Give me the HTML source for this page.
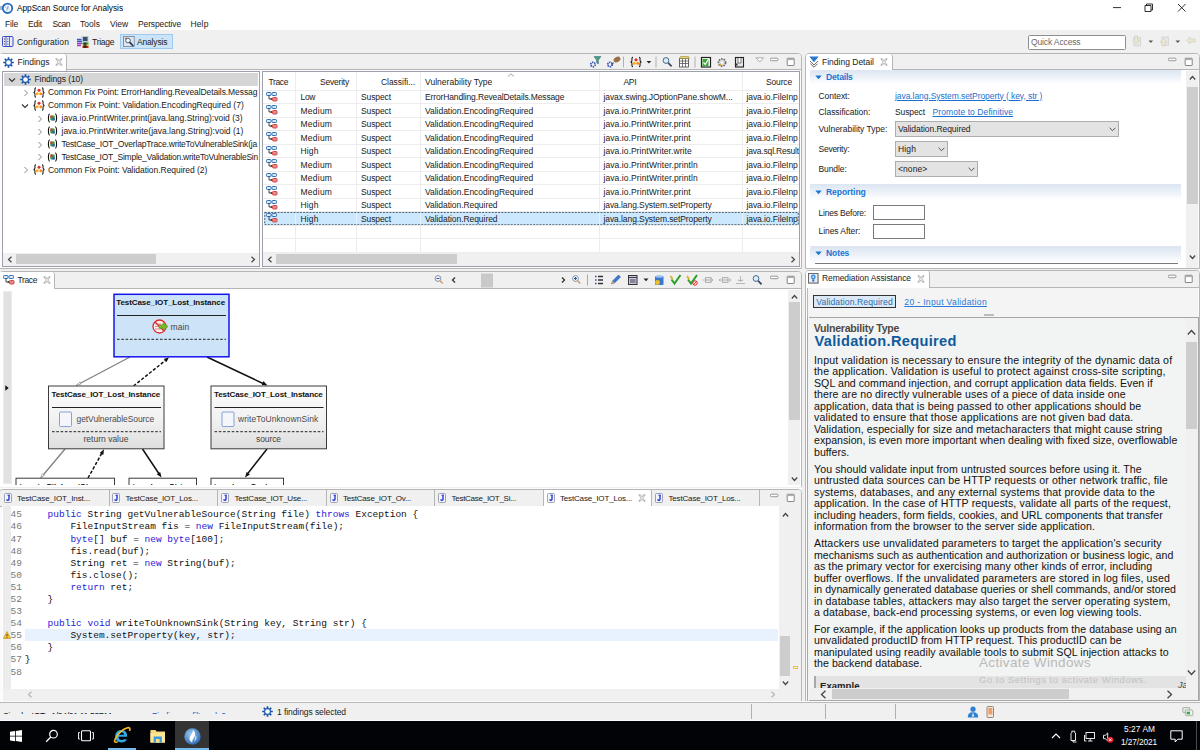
<!DOCTYPE html>
<html><head><meta charset="utf-8"><title>AppScan Source for Analysis</title>
<style>
*{box-sizing:border-box;margin:0;padding:0}
html,body{width:1200px;height:750px;overflow:hidden;background:#f0f0f0;font-family:"Liberation Sans",sans-serif;font-size:8.5px;color:#1a1a1a}
.abs,.abs *{position:absolute}
.t{white-space:pre;line-height:12px;height:12px}
#title{left:0;top:0;width:1200px;height:16px;background:#fff}
#menu{left:0;top:16px;width:1200px;height:14px;background:#fff}
#tool{left:0;top:30px;width:1200px;height:23px;background:#f0f0f0}
.panel{background:#f0f0f0;border:1px solid #a9a9a9}
.tabbar{left:0;top:0;height:16px;right:0;border-bottom:1px solid #a9a9a9;background:#f0f0f0}
.tab{top:0;height:16px;background:#fff;border-right:1px solid #a9a9a9}
.white{background:#fff}
#taskbar{left:0;top:720px;width:1200px;height:30px;background:#020307}
#status{left:0;top:701px;width:1200px;height:19px;background:#f0f0f0}

.pan{background:#fbfbfb}
.hl{height:1px;background:#ababab}
.vl{width:1px;background:#b6b6b6}
.box{background:#fff;border:1px solid #9da1ab}
.sb{background:#f0f0f0}
.th{background:#cdcdcd}
.chev{stroke:#444;stroke-width:1.1;fill:none}
.gl{background:#ededed}

.lnk{color:#1a6fd0;text-decoration:underline}
.sec{font-weight:bold;color:#1a76d2;font-size:8.6px}
.combo{background:#e3e3e3;border:1px solid #adadad}
.inp{background:#fff;border:1px solid #7a7a7a}

.rb{font-size:10.600px;line-height:11.46px;height:11.46px;color:#111;white-space:pre}

.code{font-family:"Liberation Mono",monospace;font-size:9.510px;line-height:12.130px;height:12.130px;white-space:pre;color:#111}
.kw{color:#2a1ad8;position:static}
.ln{font-family:"Liberation Mono",monospace;font-size:9.510px;line-height:12.130px;height:12.130px;color:#787878;width:20px;text-align:right}
</style></head><body>
<div class="abs" id="root" style="left:0;top:0;width:1200px;height:750px">

<!-- TITLE -->
<div id="title">
<svg style="left:0;top:1.500px" width="15" height="13" viewBox="0 0 15 13"><rect x="0" y="4" width="2.500" height="4" fill="#a9b9d3"/><circle cx="7.500" cy="6.300" r="4.700" fill="#fbfdff" stroke="#2b6fbc" stroke-width="1.900"/><path d="M7.800 3c1.100 1 1.200 2.400.5 3.500-.5.800-1.100 1.300-.9 2.400-1.200-.7-1.500-2-.8-3 .4-.7 1.300-1.400 1.200-2.900z" fill="#8ab4e0"/><circle cx="5.800" cy="5" r=".6" fill="#6aa0d8"/><circle cx="9.300" cy="7" r=".5" fill="#6aa0d8"/></svg>
<div class="t" style="letter-spacing:-0.015px;left:17px;top:2.5px;font-size:8.25px;color:#000">AppScan Source for Analysis</div>
<svg style="left:1108px;top:0" width="90" height="16" viewBox="0 0 90 16"><g stroke="#1a1a1a" stroke-width="0.9" fill="none"><path d="M5 7.6h8"/><path d="M37 5.500h6v6h-6z"/><path d="M38.500 5.500v-1.500h6v6h-1.500"/><path d="M70 4l7.500 7.500M77.500 4l-7.500 7.500"/></g></svg>
</div>
<!-- MENU -->
<div id="menu">
<div class="t" style="letter-spacing:-0.176px;left:5px;top:1.5px">File</div>
<div class="t" style="letter-spacing:-0.164px;left:28px;top:1.5px">Edit</div>
<div class="t" style="letter-spacing:-0.469px;left:52.500px;top:1.5px">Scan</div>
<div class="t" style="letter-spacing:0.031px;left:80px;top:1.5px">Tools</div>
<div class="t" style="letter-spacing:-0.070px;left:110px;top:1.5px">View</div>
<div class="t" style="letter-spacing:-0.129px;left:138px;top:1.5px">Perspective</div>
<div class="t" style="letter-spacing:0.129px;left:190.500px;top:1.5px">Help</div>
</div>
<!-- TOOLBAR -->
<div id="tool">
<svg style="left:2px;top:6px" width="12" height="11" viewBox="0 0 12 11"><rect x=".5" y=".5" width="10.500" height="10" rx="1" fill="#e8ecfa" stroke="#3b48c8"/><path d="M4 1v9M7.500 1v9" stroke="#3b48c8" stroke-width=".8"/><path d="M2 3h1M2 5.500h1M2 8h1M5.300 3h1M5.300 5.500h1M5.300 8h1" stroke="#333" stroke-width=".9"/></svg>
<div class="t" style="letter-spacing:0.111px;left:17px;top:5.5px">Configuration</div>
<svg style="left:77px;top:6px" width="12" height="12" viewBox="0 0 12 12"><rect x="4.500" y="0" width="7" height="6" fill="#bcc8d8"/><rect x="6" y="1" width="4.500" height="4" fill="#39506e"/><path d="M0 3.500h4.500M0 5.500h5" stroke="#3a56c8" stroke-width="1.300"/><path d="M0 7.500h5M0 9.500h4" stroke="#9a3fc0" stroke-width="1.300"/><rect x="5.500" y="6.500" width="6" height="2" fill="#20a030"/><rect x="5.500" y="8.500" width="6" height="1.500" fill="#e0c020"/><rect x="5.500" y="10" width="6" height="2" fill="#d02818"/><rect x="6.500" y="6.500" width="3" height="5.500" fill="#222" opacity=".75"/></svg>
<div class="t" style="letter-spacing:-0.247px;left:92px;top:5.5px">Triage</div>
<div style="left:120px;top:4px;width:53px;height:15px;background:#cce4f7;border:1px solid #9ccaf0"></div>
<svg style="left:123px;top:6px" width="12" height="11" viewBox="0 0 12 11"><rect x=".4" y=".4" width="10.800" height="10" fill="#dfe6ee" stroke="#6d7f96" stroke-width=".8"/><path d="M2 2l1 1.500M3.500 1.500l.5 1.500" stroke="#c03030" stroke-width=".8"/><circle cx="5" cy="4.500" r="2.300" fill="#f4f8ff" stroke="#44556a" stroke-width=".9"/><path d="M6.600 6.200l3.600 3.800" stroke="#2a3a50" stroke-width="1.800"/></svg>
<div class="t" style="letter-spacing:-0.170px;left:137px;top:5.5px">Analysis</div>
<div style="left:1028px;top:4.500px;width:98px;height:15px;background:#fff;border:1px solid #8e8e8e;border-radius:1.500px"></div>
<div class="t" style="letter-spacing:-0.128px;left:1031px;top:6px;color:#6a6a6a">Quick Access</div>
<svg style="left:1130px;top:5px" width="70" height="14" viewBox="0 0 70 14"><g fill="#e6e6e2" stroke="#cacaca" stroke-width=".6"><rect x="4" y="2.500" width="6.500" height="8.500"/><path d="M4.500 1v4h-2l3.500 3.500 3.500-3.500h-2v-4z" fill="#ece8c8"/><rect x="32" y="2" width="6.500" height="8.500"/><path d="M32 11v-4h-2l3.500-3.500 3.500 3.500h-2v4z" fill="#ece8c8"/><path d="M65 4h-5v-2l-3.500 3.500 3.500 3.500v-2h5z" fill="#ece8c8"/></g><path d="M18.500 5.500h4.600l-2.300 2.500zM45.500 5.500h4.600l-2.300 2.500z" fill="#555"/></svg>
</div>

<!-- FINDINGS PANEL -->
<div class="pan" id="pFind" style="left:0;top:53px;width:802px;height:216px">
<div style="left:-1px;top:0;width:803px;height:216px;border:1px solid #b6b6b6;border-radius:3.500px 3.500px 0 0;background:#fbfbfb"></div><div style="left:0px;top:1px;width:801px;height:15.500px;background:#f0f0f0;border-radius:3px 3px 0 0"></div><div class="hl" style="left:67px;top:16.200px;width:734px;background:#b6b6b6"></div>
<div style="left:0;top:1px;width:67px;height:16.500px;background:#fff;border-right:1px solid #b6b6b6;border-radius:0 3px 0 0"></div>
<svg style="left:3px;top:3.5px" width="11" height="11" viewBox="0 0 11 11"><g stroke="#1a4fa8" stroke-width="1.700"><path d="M5.500 .2v10.600M.2 5.500h10.600M1.750 1.750l7.500 7.500M9.250 1.750l-7.500 7.500"/></g><circle cx="5.500" cy="5.500" r="3.500" fill="#1f5fb8"/><circle cx="5.500" cy="5.500" r="2.300" fill="#fff"/></svg>
<div class="t" style="letter-spacing:-0.018px;left:17.500px;top:2.500px">Findings</div>
<svg style="left:54.5px;top:4.5px" width="8" height="8" viewBox="0 0 8 8"><path d="M.8 .8h1.600l1.600 2 1.600-2h1.600l-2.400 3.200 2.400 3.200h-1.600l-1.600-2-1.600 2h-1.600l2.400-3.200z" fill="#fff" stroke="#808080" stroke-width=".6"/></svg>
<svg style="left:588px;top:2px" width="162" height="14" viewBox="0 0 162 14">
<path d="M6 1.500h7l-2.600 3.500v4l-1.800-1.300v-2.700z" fill="#4a9a8a" stroke="#2a6a6a" stroke-width=".5"/><circle cx="5" cy="9.500" r="2.200" fill="none" stroke="#2040c0" stroke-width="1.600" stroke-dasharray="1.300 .8"/>
<ellipse cx="29" cy="4.500" rx="3.600" ry="2.600" fill="#9a7048" transform="rotate(-30 29 4.500)"/><path d="M25.500 7.500l-2 3" stroke="#6a4a2a" stroke-width="1.200"/><circle cx="22" cy="9.500" r="2.200" fill="none" stroke="#2040c0" stroke-width="1.600" stroke-dasharray="1.300 .8"/>
<path d="M35.500 1.500v11" stroke="#b0b0b0" stroke-width="1"/>
<g transform="translate(42,1.500)"><path d="M3 .8c-1.500 0-1 2-1 3s-.6 1.500-1.400 1.700c.8.200 1.400.700 1.400 1.700s-.5 3 1 3M9 .8c1.500 0 1 2 1 3s.6 1.500 1.400 1.700c-.8.200-1.400.700-1.400 1.700s.5 3-1 3" stroke="#1a1a1a" stroke-width="1.050" fill="none"/><circle cx="6" cy="3.200" r="1.500" fill="#e82820"/><circle cx="4.200" cy="6.800" r="1.500" fill="#f8b018"/><circle cx="7.800" cy="6.800" r="1.500" fill="#f89018"/></g>
<path d="M58.500 6h4.800l-2.400 2.600z" fill="#222"/>
<path d="M68 1.500v11" stroke="#b0b0b0" stroke-width="1"/>
<circle cx="78" cy="5.500" r="2.900" fill="#d8ecfa" stroke="#4a6a8a" stroke-width="1"/><path d="M80.200 7.800l3.400 3.600" stroke="#3a4a5a" stroke-width="1.700"/>
<rect x="91.500" y="3.500" width="9" height="8.500" fill="#fff" stroke="#444" stroke-width=".8"/><path d="M91.500 6h9M91.500 8.500h9M94.500 3.500v8.500M97.500 3.500v8.500" stroke="#444" stroke-width=".7"/><path d="M92.500 1.500h8l1 2h-10z" fill="#e8d878" stroke="#8a7a30" stroke-width=".5"/>
<path d="M107 1.500v11" stroke="#b0b0b0" stroke-width="1"/>
<rect x="113.500" y="2.500" width="9" height="9.500" fill="#fff" stroke="#222" stroke-width="1.200"/><rect x="114.500" y="4" width="6" height="7" fill="#38a838"/><path d="M115.500 7.500l1.800 2 3.200-5.500" stroke="#fff" stroke-width="1.200" fill="none"/>
<circle cx="134" cy="7.500" r="3.600" fill="#d8d8d8" stroke="#6a6a6a" stroke-width="1.600" stroke-dasharray="1.600 1"/><circle cx="134" cy="7.500" r="1.300" fill="#fff"/><path d="M130 10l2.500-1.500 1 2.500z" fill="#e0a020"/>
<rect x="147.500" y="2.500" width="8" height="9.500" fill="#e8e8e8" stroke="#222" stroke-width="1.100"/><path d="M150 3v5h3v-5" stroke="#555" stroke-width=".8" fill="#fff"/><path d="M146.500 9.500l3-1.500v3z" fill="#333"/>
</svg>
<svg style="left:755px;top:4px" width="10" height="6" viewBox="0 0 10 6"><path d="M1 .8h7.500l-3.750 4.200z" fill="#fff" stroke="#8a8a8a" stroke-width=".7"/></svg>
<svg style="left:770px;top:4px" width="26" height="10" viewBox="0 0 26 10"><rect x=".4" y="1.200" width="7.600" height="2.500" rx=".9" fill="#fff" stroke="#808080" stroke-width=".8"/><rect x="17.200" y="1.300" width="7" height="7.200" rx=".5" fill="#fff" stroke="#707070" stroke-width=".85"/><path d="M17.500 2.500h6.400" stroke="#b0b0b0" stroke-width="1.200"/></svg>
<div class="box" style="left:2px;top:18px;width:258px;height:196px;overflow:hidden">
<div style="left:1px;top:0.500px;width:254px;height:13.500px;background:#d6d6d6"></div>
<svg style="left:5px;top:4.5px" width="8" height="6" viewBox="0 0 8 6"><path d="M1 1.500l3 3 3-3" stroke="#333" stroke-width="1.100" fill="none"/></svg>
<svg style="left:17px;top:1.5px" width="11" height="11" viewBox="0 0 11 11"><g stroke="#1a4fa8" stroke-width="1.700"><path d="M5.500 .2v10.600M.2 5.500h10.600M1.750 1.750l7.500 7.500M9.250 1.750l-7.500 7.500"/></g><circle cx="5.500" cy="5.500" r="3.500" fill="#1f5fb8"/><circle cx="5.500" cy="5.500" r="2.300" fill="#fff"/></svg>
<div class="t" style="letter-spacing:-0.093px;left:31.500px;top:1px">Findings (10)</div>
<svg style="left:20px;top:16.5px" width="6" height="8" viewBox="0 0 6 8"><path d="M1.500 1l3 3-3 3" stroke="#8a8a8a" stroke-width="1" fill="none"/></svg>
<svg style="left:30px;top:14.5px" width="12" height="11" viewBox="0 0 12 11"><path d="M3 .8c-1.500 0-1 2-1 3s-.6 1.500-1.400 1.700c.8.200 1.400.700 1.400 1.700s-.5 3 1 3M9 .8c1.500 0 1 2 1 3s.6 1.500 1.400 1.700c-.8.200-1.400.700-1.400 1.700s.5 3-1 3" stroke="#1a1a1a" stroke-width="1.050" fill="none"/><circle cx="6" cy="3.200" r="1.500" fill="#e82820"/><circle cx="4.200" cy="6.800" r="1.500" fill="#f8b018"/><circle cx="7.800" cy="6.800" r="1.500" fill="#f89018"/></svg>
<div class="t" style="letter-spacing:-0.090px;left:45px;top:14px">Common Fix Point: ErrorHandling.RevealDetails.Messag</div>
<svg style="left:18px;top:30.5px" width="8" height="6" viewBox="0 0 8 6"><path d="M1 1.500l3 3 3-3" stroke="#333" stroke-width="1.100" fill="none"/></svg>
<svg style="left:30px;top:27.5px" width="12" height="11" viewBox="0 0 12 11"><path d="M3 .8c-1.500 0-1 2-1 3s-.6 1.500-1.400 1.700c.8.200 1.400.700 1.400 1.700s-.5 3 1 3M9 .8c1.500 0 1 2 1 3s.6 1.500 1.400 1.700c-.8.200-1.400.700-1.400 1.700s.5 3-1 3" stroke="#1a1a1a" stroke-width="1.050" fill="none"/><circle cx="6" cy="3.200" r="1.500" fill="#e82820"/><circle cx="4.200" cy="6.800" r="1.500" fill="#f8b018"/><circle cx="7.800" cy="6.800" r="1.500" fill="#f89018"/></svg>
<div class="t" style="letter-spacing:-0.014px;left:45px;top:27px">Common Fix Point: Validation.EncodingRequired (7)</div>
<svg style="left:34px;top:42.5px" width="6" height="8" viewBox="0 0 6 8"><path d="M1.500 1l3 3-3 3" stroke="#8a8a8a" stroke-width="1" fill="none"/></svg>
<svg style="left:44px;top:41px" width="11" height="10" viewBox="0 0 11 10"><path d="M2.600 .6c-1.600 1.200-1.600 7.600 0 8.800M8.400 .6c1.600 1.200 1.600 7.600 0 8.800" stroke="#111" stroke-width="1.100" fill="none"/><rect x="3.300" y="2.500" width="4.400" height="5" rx="1" fill="#3a9a4a"/><rect x="3.300" y="2.500" width="2.200" height="2.500" fill="#d04030"/><rect x="5.500" y="5" width="2.200" height="2.500" fill="#3060c0"/></svg>
<div class="t" style="letter-spacing:0.017px;left:58.5px;top:40px">java.io.PrintWriter.print(java.lang.String):void (3)</div>
<svg style="left:34px;top:55.5px" width="6" height="8" viewBox="0 0 6 8"><path d="M1.500 1l3 3-3 3" stroke="#8a8a8a" stroke-width="1" fill="none"/></svg>
<svg style="left:44px;top:54px" width="11" height="10" viewBox="0 0 11 10"><path d="M2.600 .6c-1.600 1.200-1.600 7.600 0 8.800M8.400 .6c1.600 1.200 1.600 7.600 0 8.800" stroke="#111" stroke-width="1.100" fill="none"/><rect x="3.300" y="2.500" width="4.400" height="5" rx="1" fill="#3a9a4a"/><rect x="3.300" y="2.500" width="2.200" height="2.500" fill="#d04030"/><rect x="5.500" y="5" width="2.200" height="2.500" fill="#3060c0"/></svg>
<div class="t" style="letter-spacing:0.002px;left:58.5px;top:53px">java.io.PrintWriter.write(java.lang.String):void (1)</div>
<svg style="left:34px;top:68.5px" width="6" height="8" viewBox="0 0 6 8"><path d="M1.500 1l3 3-3 3" stroke="#8a8a8a" stroke-width="1" fill="none"/></svg>
<svg style="left:44px;top:67px" width="11" height="10" viewBox="0 0 11 10"><path d="M2.600 .6c-1.600 1.200-1.600 7.600 0 8.800M8.400 .6c1.600 1.200 1.600 7.600 0 8.800" stroke="#111" stroke-width="1.100" fill="none"/><rect x="3.300" y="2.500" width="4.400" height="5" rx="1" fill="#3a9a4a"/><rect x="3.300" y="2.500" width="2.200" height="2.500" fill="#d04030"/><rect x="5.500" y="5" width="2.200" height="2.500" fill="#3060c0"/></svg>
<div class="t" style="letter-spacing:-0.207px;left:58.5px;top:66px">TestCase_IOT_OverlapTrace.writeToVulnerableSink(ja</div>
<svg style="left:34px;top:81.0px" width="6" height="8" viewBox="0 0 6 8"><path d="M1.500 1l3 3-3 3" stroke="#8a8a8a" stroke-width="1" fill="none"/></svg>
<svg style="left:44px;top:79.5px" width="11" height="10" viewBox="0 0 11 10"><path d="M2.600 .6c-1.600 1.200-1.600 7.600 0 8.800M8.400 .6c1.600 1.200 1.600 7.600 0 8.800" stroke="#111" stroke-width="1.100" fill="none"/><rect x="3.300" y="2.500" width="4.400" height="5" rx="1" fill="#3a9a4a"/><rect x="3.300" y="2.500" width="2.200" height="2.500" fill="#d04030"/><rect x="5.500" y="5" width="2.200" height="2.500" fill="#3060c0"/></svg>
<div class="t" style="letter-spacing:-0.233px;left:58.5px;top:78.5px">TestCase_IOT_Simple_Validation.writeToVulnerableSin</div>
<svg style="left:20px;top:94.0px" width="6" height="8" viewBox="0 0 6 8"><path d="M1.500 1l3 3-3 3" stroke="#8a8a8a" stroke-width="1" fill="none"/></svg>
<svg style="left:30px;top:92.0px" width="12" height="11" viewBox="0 0 12 11"><path d="M3 .8c-1.500 0-1 2-1 3s-.6 1.500-1.400 1.700c.8.200 1.400.700 1.400 1.700s-.5 3 1 3M9 .8c1.500 0 1 2 1 3s.6 1.500 1.400 1.700c-.8.200-1.400.700-1.400 1.700s.5 3-1 3" stroke="#1a1a1a" stroke-width="1.050" fill="none"/><circle cx="6" cy="3.200" r="1.500" fill="#e82820"/><circle cx="4.200" cy="6.800" r="1.500" fill="#f8b018"/><circle cx="7.800" cy="6.800" r="1.500" fill="#f89018"/></svg>
<div class="t" style="letter-spacing:-0.040px;left:45px;top:91.5px">Common Fix Point: Validation.Required (2)</div>
<div class="sb" style="left:0;top:180.500px;width:256px;height:13.500px"></div>
<div class="th" style="left:13px;top:182px;width:140px;height:10.300px"></div>
<svg style="left:4px;top:183.600px" width="6" height="7" viewBox="0 0 6 7"><path d="M4.500 .8l-3 2.700 3 2.700" stroke="#444" stroke-width="1.200" fill="none"/></svg>
<svg style="left:247px;top:183.600px" width="6" height="7" viewBox="0 0 6 7"><path d="M1.500 .8l3 2.700-3 2.700" stroke="#444" stroke-width="1.200" fill="none"/></svg>
</div>
<div class="box" style="left:262px;top:18px;width:538px;height:196px;overflow:hidden">
<div class="gl" style="left:32.0px;top:0;width:1px;height:180.500px"></div>
<div class="gl" style="left:92.5px;top:0;width:1px;height:180.500px"></div>
<div class="gl" style="left:157.0px;top:0;width:1px;height:180.500px"></div>
<div class="gl" style="left:335.5px;top:0;width:1px;height:180.500px"></div>
<div class="gl" style="left:478.5px;top:0;width:1px;height:180.500px"></div>
<div class="gl" style="left:0;top:17.5px;width:536px;height:1px"></div>
<div class="gl" style="left:0;top:31.0px;width:536px;height:1px"></div>
<div class="gl" style="left:0;top:44.5px;width:536px;height:1px"></div>
<div class="gl" style="left:0;top:58.0px;width:536px;height:1px"></div>
<div class="gl" style="left:0;top:71.5px;width:536px;height:1px"></div>
<div class="gl" style="left:0;top:85.0px;width:536px;height:1px"></div>
<div class="gl" style="left:0;top:98.5px;width:536px;height:1px"></div>
<div class="gl" style="left:0;top:112.0px;width:536px;height:1px"></div>
<div class="gl" style="left:0;top:125.5px;width:536px;height:1px"></div>
<div class="gl" style="left:0;top:139.0px;width:536px;height:1px"></div>
<div class="gl" style="left:0;top:152.5px;width:536px;height:1px"></div>
<div class="gl" style="left:0;top:166.0px;width:536px;height:1px"></div>
<div class="gl" style="left:0;top:179.5px;width:536px;height:1px"></div>
<div style="left:1px;top:140px;width:535px;height:13.200px;background:#cce8ff"></div><svg style="left:1px;top:140px" width="535" height="13.200" viewBox="0 0 535 13.200"><rect x=".5" y=".5" width="534" height="12.200" fill="none" stroke="#4a5560" stroke-width=".9" stroke-dasharray="2 1.200"/></svg>
<div style="left:32.0px;top:140.500px;width:1px;height:11.500px;background:#e4f2fd"></div>
<div style="left:92.5px;top:140.500px;width:1px;height:11.500px;background:#e4f2fd"></div>
<div style="left:157.0px;top:140.500px;width:1px;height:11.500px;background:#e4f2fd"></div>
<div style="left:335.5px;top:140.500px;width:1px;height:11.500px;background:#e4f2fd"></div>
<div style="left:478.5px;top:140.500px;width:1px;height:11.500px;background:#e4f2fd"></div>
<div class="t" style="letter-spacing:-0.384px;left:5.5px;top:3.5px">Trace</div>
<div class="t" style="letter-spacing:-0.215px;left:57px;top:3.5px">Severity</div>
<div class="t" style="letter-spacing:-0.044px;left:118px;top:3.5px">Classifi...</div>
<div class="t" style="letter-spacing:0.037px;left:162px;top:3.5px">Vulnerability Type</div>
<div class="t" style="letter-spacing:-0.334px;left:360.5px;top:3.5px">API</div>
<div class="t" style="letter-spacing:-0.156px;left:503px;top:3.5px">Source</div>
<svg style="left:244px;top:0.500px" width="8" height="4" viewBox="0 0 8 4"><path d="M1 3.500l3-2.700 3 2.700" stroke="#8a8a8a" stroke-width=".8" fill="none"/></svg>
<svg style="left:3px;top:19.5px" width="12" height="10" viewBox="0 0 12 10"><rect x=".5" y=".5" width="4.500" height="3" rx=".8" fill="#dce9f7" stroke="#2f6fb5"/><rect x="6" y=".5" width="4.500" height="3" rx=".8" fill="#dce9f7" stroke="#2f6fb5"/><path d="M3 3.500v3.500h3" stroke="#333" stroke-width=".9" fill="none"/><path d="M4.800 5.800l1.700 1.200-1.700 1.200z" fill="#222"/><rect x="6.500" y="5.500" width="4.500" height="3.500" rx=".8" fill="#e58a8a" stroke="#d04848"/></svg>
<div class="t" style="letter-spacing:-0.298px;left:37.5px;top:19.0px">Low</div>
<div class="t" style="letter-spacing:-0.103px;left:98px;top:19.0px">Suspect</div>
<div class="t" style="letter-spacing:-0.137px;left:162px;top:19.0px">ErrorHandling.RevealDetails.Message</div>
<div class="t" style="letter-spacing:-0.082px;left:340.5px;top:19.0px">javax.swing.JOptionPane.showM...</div>
<div class="t" style="letter-spacing:-0.084px;left:483.5px;top:19.0px">java.io.FileInp</div>
<svg style="left:3px;top:33.0px" width="12" height="10" viewBox="0 0 12 10"><rect x=".5" y=".5" width="4.500" height="3" rx=".8" fill="#dce9f7" stroke="#2f6fb5"/><rect x="6" y=".5" width="4.500" height="3" rx=".8" fill="#dce9f7" stroke="#2f6fb5"/><path d="M3 3.500v3.500h3" stroke="#333" stroke-width=".9" fill="none"/><path d="M4.800 5.800l1.700 1.200-1.700 1.200z" fill="#222"/><rect x="6.500" y="5.500" width="4.500" height="3.500" rx=".8" fill="#e58a8a" stroke="#d04848"/></svg>
<div class="t" style="letter-spacing:0.244px;left:37.5px;top:32.5px">Medium</div>
<div class="t" style="letter-spacing:-0.103px;left:98px;top:32.5px">Suspect</div>
<div class="t" style="letter-spacing:-0.027px;left:162px;top:32.5px">Validation.EncodingRequired</div>
<div class="t" style="letter-spacing:0.074px;left:340.5px;top:32.5px">java.io.PrintWriter.print</div>
<div class="t" style="letter-spacing:-0.084px;left:483.5px;top:32.5px">java.io.FileInp</div>
<svg style="left:3px;top:46.5px" width="12" height="10" viewBox="0 0 12 10"><rect x=".5" y=".5" width="4.500" height="3" rx=".8" fill="#dce9f7" stroke="#2f6fb5"/><rect x="6" y=".5" width="4.500" height="3" rx=".8" fill="#dce9f7" stroke="#2f6fb5"/><path d="M3 3.500v3.500h3" stroke="#333" stroke-width=".9" fill="none"/><path d="M4.800 5.800l1.700 1.200-1.700 1.200z" fill="#222"/><rect x="6.500" y="5.500" width="4.500" height="3.500" rx=".8" fill="#e58a8a" stroke="#d04848"/></svg>
<div class="t" style="letter-spacing:0.244px;left:37.5px;top:46.0px">Medium</div>
<div class="t" style="letter-spacing:-0.103px;left:98px;top:46.0px">Suspect</div>
<div class="t" style="letter-spacing:-0.027px;left:162px;top:46.0px">Validation.EncodingRequired</div>
<div class="t" style="letter-spacing:0.074px;left:340.5px;top:46.0px">java.io.PrintWriter.print</div>
<div class="t" style="letter-spacing:-0.084px;left:483.5px;top:46.0px">java.io.FileInp</div>
<svg style="left:3px;top:60.0px" width="12" height="10" viewBox="0 0 12 10"><rect x=".5" y=".5" width="4.500" height="3" rx=".8" fill="#dce9f7" stroke="#2f6fb5"/><rect x="6" y=".5" width="4.500" height="3" rx=".8" fill="#dce9f7" stroke="#2f6fb5"/><path d="M3 3.500v3.500h3" stroke="#333" stroke-width=".9" fill="none"/><path d="M4.800 5.800l1.700 1.200-1.700 1.200z" fill="#222"/><rect x="6.500" y="5.500" width="4.500" height="3.500" rx=".8" fill="#e58a8a" stroke="#d04848"/></svg>
<div class="t" style="letter-spacing:0.244px;left:37.5px;top:59.5px">Medium</div>
<div class="t" style="letter-spacing:-0.103px;left:98px;top:59.5px">Suspect</div>
<div class="t" style="letter-spacing:-0.027px;left:162px;top:59.5px">Validation.EncodingRequired</div>
<div class="t" style="letter-spacing:0.074px;left:340.5px;top:59.5px">java.io.PrintWriter.print</div>
<div class="t" style="letter-spacing:-0.084px;left:483.5px;top:59.5px">java.io.FileInp</div>
<svg style="left:3px;top:73.5px" width="12" height="10" viewBox="0 0 12 10"><rect x=".5" y=".5" width="4.500" height="3" rx=".8" fill="#dce9f7" stroke="#2f6fb5"/><rect x="6" y=".5" width="4.500" height="3" rx=".8" fill="#dce9f7" stroke="#2f6fb5"/><path d="M3 3.500v3.500h3" stroke="#333" stroke-width=".9" fill="none"/><path d="M4.800 5.800l1.700 1.200-1.700 1.200z" fill="#222"/><rect x="6.500" y="5.500" width="4.500" height="3.500" rx=".8" fill="#e58a8a" stroke="#d04848"/></svg>
<div class="t" style="letter-spacing:0.129px;left:37.5px;top:73.0px">High</div>
<div class="t" style="letter-spacing:-0.103px;left:98px;top:73.0px">Suspect</div>
<div class="t" style="letter-spacing:-0.027px;left:162px;top:73.0px">Validation.EncodingRequired</div>
<div class="t" style="letter-spacing:0.057px;left:340.5px;top:73.0px">java.io.PrintWriter.write</div>
<div class="t" style="letter-spacing:-0.185px;left:483.5px;top:73.0px">java.sql.Result</div>
<svg style="left:3px;top:87.0px" width="12" height="10" viewBox="0 0 12 10"><rect x=".5" y=".5" width="4.500" height="3" rx=".8" fill="#dce9f7" stroke="#2f6fb5"/><rect x="6" y=".5" width="4.500" height="3" rx=".8" fill="#dce9f7" stroke="#2f6fb5"/><path d="M3 3.500v3.500h3" stroke="#333" stroke-width=".9" fill="none"/><path d="M4.800 5.800l1.700 1.200-1.700 1.200z" fill="#222"/><rect x="6.500" y="5.500" width="4.500" height="3.500" rx=".8" fill="#e58a8a" stroke="#d04848"/></svg>
<div class="t" style="letter-spacing:0.244px;left:37.5px;top:86.5px">Medium</div>
<div class="t" style="letter-spacing:-0.103px;left:98px;top:86.5px">Suspect</div>
<div class="t" style="letter-spacing:-0.027px;left:162px;top:86.5px">Validation.EncodingRequired</div>
<div class="t" style="letter-spacing:0.083px;left:340.5px;top:86.5px">java.io.PrintWriter.println</div>
<div class="t" style="letter-spacing:-0.084px;left:483.5px;top:86.5px">java.io.FileInp</div>
<svg style="left:3px;top:100.5px" width="12" height="10" viewBox="0 0 12 10"><rect x=".5" y=".5" width="4.500" height="3" rx=".8" fill="#dce9f7" stroke="#2f6fb5"/><rect x="6" y=".5" width="4.500" height="3" rx=".8" fill="#dce9f7" stroke="#2f6fb5"/><path d="M3 3.500v3.500h3" stroke="#333" stroke-width=".9" fill="none"/><path d="M4.800 5.800l1.700 1.200-1.700 1.200z" fill="#222"/><rect x="6.500" y="5.500" width="4.500" height="3.500" rx=".8" fill="#e58a8a" stroke="#d04848"/></svg>
<div class="t" style="letter-spacing:0.244px;left:37.5px;top:100.0px">Medium</div>
<div class="t" style="letter-spacing:-0.103px;left:98px;top:100.0px">Suspect</div>
<div class="t" style="letter-spacing:-0.027px;left:162px;top:100.0px">Validation.EncodingRequired</div>
<div class="t" style="letter-spacing:0.083px;left:340.5px;top:100.0px">java.io.PrintWriter.println</div>
<div class="t" style="letter-spacing:-0.084px;left:483.5px;top:100.0px">java.io.FileInp</div>
<svg style="left:3px;top:114.0px" width="12" height="10" viewBox="0 0 12 10"><rect x=".5" y=".5" width="4.500" height="3" rx=".8" fill="#dce9f7" stroke="#2f6fb5"/><rect x="6" y=".5" width="4.500" height="3" rx=".8" fill="#dce9f7" stroke="#2f6fb5"/><path d="M3 3.500v3.500h3" stroke="#333" stroke-width=".9" fill="none"/><path d="M4.800 5.800l1.700 1.200-1.700 1.200z" fill="#222"/><rect x="6.500" y="5.500" width="4.500" height="3.500" rx=".8" fill="#e58a8a" stroke="#d04848"/></svg>
<div class="t" style="letter-spacing:0.244px;left:37.5px;top:113.5px">Medium</div>
<div class="t" style="letter-spacing:-0.103px;left:98px;top:113.5px">Suspect</div>
<div class="t" style="letter-spacing:-0.027px;left:162px;top:113.5px">Validation.EncodingRequired</div>
<div class="t" style="letter-spacing:0.074px;left:340.5px;top:113.5px">java.io.PrintWriter.print</div>
<div class="t" style="letter-spacing:-0.084px;left:483.5px;top:113.5px">java.io.FileInp</div>
<svg style="left:3px;top:127.5px" width="12" height="10" viewBox="0 0 12 10"><rect x=".5" y=".5" width="4.500" height="3" rx=".8" fill="#dce9f7" stroke="#2f6fb5"/><rect x="6" y=".5" width="4.500" height="3" rx=".8" fill="#dce9f7" stroke="#2f6fb5"/><path d="M3 3.500v3.500h3" stroke="#333" stroke-width=".9" fill="none"/><path d="M4.800 5.800l1.700 1.200-1.700 1.200z" fill="#222"/><rect x="6.500" y="5.500" width="4.500" height="3.500" rx=".8" fill="#e58a8a" stroke="#d04848"/></svg>
<div class="t" style="letter-spacing:0.129px;left:37.5px;top:127.0px">High</div>
<div class="t" style="letter-spacing:-0.103px;left:98px;top:127.0px">Suspect</div>
<div class="t" style="letter-spacing:-0.056px;left:162px;top:127.0px">Validation.Required</div>
<div class="t" style="letter-spacing:-0.084px;left:340.5px;top:127.0px">java.lang.System.setProperty</div>
<div class="t" style="letter-spacing:-0.084px;left:483.5px;top:127.0px">java.io.FileInp</div>
<svg style="left:3px;top:141.0px" width="12" height="10" viewBox="0 0 12 10"><rect x=".5" y=".5" width="4.500" height="3" rx=".8" fill="#dce9f7" stroke="#2f6fb5"/><rect x="6" y=".5" width="4.500" height="3" rx=".8" fill="#dce9f7" stroke="#2f6fb5"/><path d="M3 3.500v3.500h3" stroke="#333" stroke-width=".9" fill="none"/><path d="M4.800 5.800l1.700 1.200-1.700 1.200z" fill="#222"/><rect x="6.500" y="5.500" width="4.500" height="3.500" rx=".8" fill="#e58a8a" stroke="#d04848"/></svg>
<div class="t" style="letter-spacing:0.129px;left:37.5px;top:140.5px">High</div>
<div class="t" style="letter-spacing:-0.103px;left:98px;top:140.5px">Suspect</div>
<div class="t" style="letter-spacing:-0.056px;left:162px;top:140.5px">Validation.Required</div>
<div class="t" style="letter-spacing:-0.084px;left:340.5px;top:140.5px">java.lang.System.setProperty</div>
<div class="t" style="letter-spacing:-0.084px;left:483.5px;top:140.5px">java.io.FileInp</div>
<div class="sb" style="left:0;top:180.500px;width:536px;height:13.500px"></div>
<div class="th" style="left:13px;top:182px;width:181px;height:10.300px"></div>
<svg style="left:4px;top:183.600px" width="6" height="7" viewBox="0 0 6 7"><path d="M4.500 .8l-3 2.700 3 2.700" stroke="#444" stroke-width="1.200" fill="none"/></svg>
<svg style="left:527px;top:183.600px" width="6" height="7" viewBox="0 0 6 7"><path d="M1.500 .8l3 2.700-3 2.700" stroke="#444" stroke-width="1.200" fill="none"/></svg>
</div>
</div>
<!-- FINDING DETAIL PANEL -->
<div class="pan" id="pDet" style="left:805px;top:53px;width:395px;height:216px">
<div style="left:0px;top:0;width:395px;height:216px;border:1px solid #b6b6b6;border-radius:3.500px 3.500px 0 0;background:#fbfbfb"></div><div style="left:1px;top:1px;width:393px;height:15.500px;background:#f0f0f0;border-radius:3px 3px 0 0"></div><div class="hl" style="left:87px;top:16.200px;width:307px;background:#b6b6b6"></div>
<div style="left:1px;top:1px;width:87px;height:16.500px;background:#fff;border-right:1px solid #b6b6b6;border-radius:3px 3px 0 0"></div>
<svg style="left:3.500px;top:2.800px" width="10" height="11.800" viewBox="0 0 11 13"><path d="M.3 .5h10.400l-5.200 6.500z" fill="#2a78c8"/><path d="M1 5.500l4.500 4.500 4.500-4.500M1.500 8.500l4 4 4-4" stroke="#555" stroke-width="1" fill="none"/></svg>
<div class="t" style="letter-spacing:0.001px;left:17px;top:2.500px">Finding Detail</div>
<svg style="left:74.5px;top:4.5px" width="8" height="8" viewBox="0 0 8 8"><path d="M.8 .8h1.600l1.600 2 1.600-2h1.600l-2.400 3.200 2.400 3.200h-1.600l-1.600-2-1.600 2h-1.600l2.400-3.200z" fill="#fff" stroke="#808080" stroke-width=".6"/></svg>
<svg style="left:363px;top:4px" width="26" height="10" viewBox="0 0 26 10"><rect x=".4" y="1.200" width="7.600" height="2.500" rx=".9" fill="#fff" stroke="#808080" stroke-width=".8"/><rect x="17.200" y="1.300" width="7" height="7.200" rx=".5" fill="#fff" stroke="#707070" stroke-width=".85"/><path d="M17.500 2.500h6.400" stroke="#b0b0b0" stroke-width="1.200"/></svg>
<div style="left:1px;top:18px;width:380px;height:197px;background:#fff"></div>
<div style="left:5px;top:17.2px;width:371px;height:14px;background:linear-gradient(#dbe5f1,#eef3f9 55%,#fff);border-radius:2px 0 0 0"></div><svg style="left:10.200px;top:21.5px" width="7" height="5" viewBox="0 0 7 5"><path d="M.3 .5h6.400l-3.200 3.800z" fill="#1a76d2"/></svg><div class="t sec" style="letter-spacing:-0.213px;left:21px;top:17.5px">Details</div>
<div class="t" style="letter-spacing:-0.057px;left:13.500px;top:36.5px">Context:</div>
<div class="t" style="letter-spacing:-0.043px;left:13.500px;top:52.5px">Classification:</div>
<div class="t" style="letter-spacing:-0.010px;left:13.500px;top:70px">Vulnerability Type:</div>
<div class="t" style="letter-spacing:-0.253px;left:13.500px;top:90px">Severity:</div>
<div class="t" style="letter-spacing:-0.092px;left:13.500px;top:110px">Bundle:</div>
<div class="t" style="letter-spacing:-0.200px;left:13.500px;top:153.5px">Lines Before:</div>
<div class="t" style="letter-spacing:-0.061px;left:13.500px;top:172px">Lines After:</div>
<div class="t lnk" style="letter-spacing:-0.067px;left:90px;top:36.5px">java.lang.System.setProperty ( key, str )</div>
<div class="t" style="letter-spacing:-0.103px;left:90px;top:52.5px">Suspect</div>
<div class="t lnk" style="letter-spacing:0.085px;left:127.500px;top:52.5px">Promote to Definitive</div>
<div class="combo" style="left:90px;top:68.3px;width:223.5px;height:15.500px"></div><div class="t" style="letter-spacing:-0.056px;left:93px;top:70.0px">Validation.Required</div><svg style="left:303.5px;top:73.8px" width="7" height="5" viewBox="0 0 7 5"><path d="M.6 .8l2.900 2.900 2.900-2.900" stroke="#444" stroke-width=".9" fill="none"/></svg>
<div class="combo" style="left:90px;top:88.30000000000001px;width:53px;height:15.500px"></div><div class="t" style="letter-spacing:0.129px;left:93px;top:90.00000000000001px">High</div><svg style="left:133px;top:93.80000000000001px" width="7" height="5" viewBox="0 0 7 5"><path d="M.6 .8l2.900 2.900 2.900-2.900" stroke="#444" stroke-width=".9" fill="none"/></svg>
<div class="combo" style="left:90px;top:108.30000000000001px;width:83px;height:15.500px"></div><div class="t" style="letter-spacing:0.076px;left:93px;top:110.00000000000001px">&lt;none&gt;</div><svg style="left:163px;top:113.80000000000001px" width="7" height="5" viewBox="0 0 7 5"><path d="M.6 .8l2.900 2.900 2.900-2.900" stroke="#444" stroke-width=".9" fill="none"/></svg>
<div class="hl" style="left:5px;top:130.500px;width:371px;background:#dfe6ef"></div>
<div style="left:5px;top:131.3px;width:371px;height:16px;background:linear-gradient(#dbe5f1,#eef3f9 55%,#fff);border-radius:2px 0 0 0"></div><svg style="left:10.200px;top:137.0px" width="7" height="5" viewBox="0 0 7 5"><path d="M.3 .5h6.400l-3.200 3.800z" fill="#1a76d2"/></svg><div class="t sec" style="letter-spacing:-0.098px;left:21px;top:133.0px">Reporting</div>
<div class="inp" style="left:67.800px;top:152.3px;width:52px;height:14.500px"></div>
<div class="inp" style="left:67.800px;top:171px;width:52px;height:14.500px"></div>
<div class="hl" style="left:5px;top:192.500px;width:371px;background:#dfe6ef"></div>
<div style="left:5px;top:193.6px;width:371px;height:16px;background:linear-gradient(#dbe5f1,#eef3f9 55%,#fff);border-radius:2px 0 0 0"></div><svg style="left:10.200px;top:198.2px" width="7" height="5" viewBox="0 0 7 5"><path d="M.3 .5h6.400l-3.200 3.800z" fill="#1a76d2"/></svg><div class="t sec" style="letter-spacing:-0.118px;left:21px;top:194.2px">Notes</div>
<div class="hl" style="left:10px;top:210.300px;width:363px;background:#7a7a7a"></div>
<div class="sb" style="left:381px;top:18px;width:12px;height:197px"></div>
<div style="left:381.500px;top:34px;width:11px;height:117px;background:#cdcdcd"></div>
<svg style="left:383.500px;top:22px" width="7" height="6" viewBox="0 0 7 6"><path d="M.8 4.500l2.700-3 2.700 3" stroke="#444" stroke-width="1.200" fill="none"/></svg>
<svg style="left:383.500px;top:201px" width="7" height="6" viewBox="0 0 7 6"><path d="M.8 1.500l2.700 3 2.700-3" stroke="#444" stroke-width="1.200" fill="none"/></svg>
</div>
<!-- TRACE PANEL -->
<div class="pan" id="pTrace" style="left:0;top:271px;width:802px;height:216px">
<div style="left:-1px;top:0;width:803px;height:216.400px;border:1px solid #b6b6b6;border-radius:3.500px 3.500px 0 0;background:#fbfbfb"></div><div style="left:0px;top:1px;width:801px;height:15.500px;background:#f0f0f0;border-radius:3px 3px 0 0"></div><div class="hl" style="left:55px;top:16.700px;width:746px;background:#b6b6b6"></div>
<div style="left:0;top:1px;width:55px;height:16.500px;background:#fff;border-right:1px solid #b6b6b6;border-radius:0 3px 0 0"></div>
<svg style="left:3px;top:4px" width="12" height="10" viewBox="0 0 12 10"><rect x=".5" y=".5" width="4.500" height="3" rx=".8" fill="#dce9f7" stroke="#2f6fb5"/><rect x="6" y=".5" width="4.500" height="3" rx=".8" fill="#dce9f7" stroke="#2f6fb5"/><path d="M3 3.500v3.500h3" stroke="#333" stroke-width=".9" fill="none"/><path d="M4.800 5.800l1.700 1.200-1.700 1.200z" fill="#222"/><rect x="6.500" y="5.500" width="4.500" height="3.500" rx=".8" fill="#e58a8a" stroke="#d04848"/></svg>
<div class="t" style="letter-spacing:-0.384px;left:17.500px;top:3px">Trace</div>
<svg style="left:43px;top:5px" width="8" height="8" viewBox="0 0 8 8"><path d="M.8 .8h1.600l1.600 2 1.600-2h1.600l-2.400 3.200 2.400 3.200h-1.600l-1.600-2-1.600 2h-1.600l2.400-3.200z" fill="#fff" stroke="#808080" stroke-width=".6"/></svg>
<svg style="left:430px;top:1px" width="340" height="16" viewBox="0 0 340 16">
<circle cx="8" cy="6.500" r="2.900" fill="#eef4fa" stroke="#7a8a9a" stroke-width=".9"/><path d="M6.500 6.500h3" stroke="#3050c0" stroke-width="1"/><path d="M10.200 8.800l2.500 2.700" stroke="#d09a70" stroke-width="1.500"/>
<path d="M25 5.500l-2.500 2.500 2.500 2.500" stroke="#333" stroke-width="1.300" fill="none"/>
<rect x="51" y="1.500" width="12" height="14" fill="#c9c9c9"/>
<path d="M132 5.500l2.500 2.500-2.500 2.500" stroke="#333" stroke-width="1.300" fill="none"/>
<circle cx="145.500" cy="6.500" r="2.900" fill="#eef4fa" stroke="#7a8a9a" stroke-width=".9"/><path d="M144 6.500h3M145.500 5v3" stroke="#3050c0" stroke-width="1"/><path d="M147.700 8.800l2.500 2.700" stroke="#d09a70" stroke-width="1.500"/>
<path d="M157.500 2.500v11" stroke="#a8a8a8" stroke-width="1"/>
<path d="M165 4.500h1.500M165 8h1.500M165 11.500h1.500" stroke="#2a50b0" stroke-width="1.500"/><path d="M168 4.500h5M168 8h5M168 11.500h5" stroke="#333" stroke-width="1.300"/>
<path d="M181.500 12l1-3 6-6 2 2-6 6z" fill="#3a78d8" stroke="#2a4a90" stroke-width=".5"/><path d="M181.500 12l1-3 2 2z" fill="#e8b060"/>
<rect x="198.500" y="3.500" width="8.500" height="9" fill="#c8c8e8" stroke="#333" stroke-width="1"/><path d="M198.500 5.500h8.500M200 8h5.500M200 10h5.500" stroke="#333" stroke-width=".9"/>
<path d="M213.500 6.500h5l-2.500 2.800z" fill="#222"/>
<rect x="225" y="4" width="8.500" height="9" rx="1" fill="#3a78d0"/><ellipse cx="229.300" cy="4.500" rx="4.200" ry="1.300" fill="#9cc0ec"/><circle cx="227.500" cy="10.500" r="2.400" fill="#f0c020"/>
<path d="M241.500 7.500l3 4 6-8.500" stroke="#28a028" stroke-width="2" fill="none"/><path d="M240.500 4l2 3" stroke="#e0b020" stroke-width="1.800"/>
<path d="M258 7.500l3 4 6-8.500" stroke="#28a028" stroke-width="2" fill="none"/><path d="M257 4l2 3" stroke="#e0b020" stroke-width="1.800"/><circle cx="265" cy="11" r="2.200" fill="#fff" stroke="#e02020" stroke-width="1"/><path d="M263.500 12.500l3-3" stroke="#e02020" stroke-width=".9"/>
<g stroke="#b0b0b0" stroke-width=".9" fill="#e4e4e4"><rect x="275.500" y="5.500" width="5.500" height="5"/><path d="M272.500 8h10M281 6l2 2-2 2" fill="none"/><rect x="292.500" y="5.500" width="5.500" height="5"/><path d="M289 8h12M290.500 6.500l-1.500 1.500 1.500 1.500M299.500 6.500l1.500 1.500-1.500 1.500" fill="none"/><path d="M306 11.500h9M308 8.500h5M310.500 4v5M308.500 7.500l2 2 2-2" fill="none"/></g>
<circle cx="326" cy="6.500" r="2.900" fill="#d8ecfa" stroke="#4a6a8a" stroke-width="1"/><path d="M328.200 8.800l3.400 3.600" stroke="#3a4a5a" stroke-width="1.700"/>
</svg>
<svg style="left:770px;top:4px" width="26" height="10" viewBox="0 0 26 10"><rect x=".4" y="1.200" width="7.600" height="2.500" rx=".9" fill="#fff" stroke="#808080" stroke-width=".8"/><rect x="17.200" y="1.300" width="7" height="7.200" rx=".5" fill="#fff" stroke="#707070" stroke-width=".85"/><path d="M17.500 2.500h6.400" stroke="#b0b0b0" stroke-width="1.200"/></svg>
<div style="left:0;top:18px;width:801px;height:198px;background:#fff;overflow:hidden" id="traceC">
<div style="left:3px;top:2px;width:9px;height:193px;background:#e1e1e1;border:1px solid #ececec"></div>
<svg style="left:5px;top:96px" width="4" height="6" viewBox="0 0 4 6"><path d="M.3 .3l3.400 2.700-3.400 2.700z" fill="#111"/></svg>
<svg style="left:0;top:0" width="787" height="196" viewBox="0 0 787 196"><defs><linearGradient id="ng" x1="0" y1="0" x2="0" y2="1"><stop offset="0" stop-color="#fdfdfd"/><stop offset=".55" stop-color="#f1f1f1"/><stop offset="1" stop-color="#dedede"/></linearGradient></defs><path d="M130 68L77 96" stroke="#808080" stroke-width="1.300"/><path d="M76 96.6l3.800-3.400 .9 2z" fill="#fff" stroke="#7a7a7a" stroke-width=".6"/><path d="M133.500 97L166 71" stroke="#111" stroke-width="1.500" stroke-dasharray="3.200 1.800"/><path d="M169 68.3l-5.200 1.800 2.600 3.200z" fill="#111"/><path d="M207 68L263 94.5" stroke="#111" stroke-width="1.500"/><path d="M267.500 96.5l-5.800-.6 1.800-3.800z" fill="#111"/><path d="M65 160L41.500 188" stroke="#808080" stroke-width="1.300"/><path d="M40.500 189l2-4.300 1.800 1.500z" fill="#fff" stroke="#7a7a7a" stroke-width=".6"/><path d="M88 189L102.500 163" stroke="#111" stroke-width="1.500" stroke-dasharray="3.200 1.800"/><path d="M104 160.3l-4.300 3.600 3.600 2z" fill="#111"/><path d="M142.500 160L159.500 185.5" stroke="#111" stroke-width="1.500"/><path d="M161.500 188.5l-4.800-3.200 3.500-2.300z" fill="#111"/><path d="M267 160L247 185.5" stroke="#111" stroke-width="1.500"/><path d="M245 188.5l1.600-5.600 3.300 2.600z" fill="#111"/><rect x="114" y="5.3" width="115" height="62.500" fill="#cde4f8" stroke="#1414f0" stroke-width="1.500"/><path d="M117 26.5h109" stroke="#222" stroke-width="1"/><path d="M117 50.3h109" stroke="#222" stroke-width="1" stroke-dasharray="2.600 1.700"/><rect x="48.5" y="97" width="115.500" height="62.800" fill="url(#ng)" stroke="#3a3a3a" stroke-width="1"/><path d="M52.0 118.5h109" stroke="#222" stroke-width="1"/><path d="M52.0 142.7h109" stroke="#222" stroke-width="1" stroke-dasharray="2.600 1.700"/><rect x="59.5" y="123" width="12" height="14.500" rx="1" fill="#f4f6fb" stroke="#7a98d0" stroke-width=".9"/><rect x="211" y="97" width="115.500" height="62.800" fill="url(#ng)" stroke="#3a3a3a" stroke-width="1"/><path d="M214.5 118.5h109" stroke="#222" stroke-width="1"/><path d="M214.5 142.7h109" stroke="#222" stroke-width="1" stroke-dasharray="2.600 1.700"/><rect x="222" y="123" width="12" height="14.500" rx="1" fill="#f4f6fb" stroke="#7a98d0" stroke-width=".9"/><rect x="16" y="189.2" width="98.5" height="20" fill="#fff" stroke="#3a3a3a" stroke-width="1"/><rect x="129" y="189.2" width="67.5" height="20" fill="#fff" stroke="#3a3a3a" stroke-width="1"/><rect x="211" y="189.2" width="72.5" height="20" fill="#fff" stroke="#3a3a3a" stroke-width="1"/><g transform="translate(152,30)"><circle cx="7.500" cy="7.500" r="6.500" fill="#fdf0f0" stroke="#e02828" stroke-width="1.300"/><path d="M3 5h6M3 7.500h6M3 10h6" stroke="#e08080" stroke-width=".9"/><path d="M3 3l9 9" stroke="#e02828" stroke-width="1.300"/><path d="M7 5.800h4v-2.300l5 4-5 4v-2.300h-4z" fill="#78b828" stroke="#4a8a18" stroke-width=".5"/></g></svg>
<div class="t" style="letter-spacing:-0.114px;left:116.300px;top:7.5px;font-weight:bold;font-size:8.050px;color:#111">TestCase_IOT_Lost_Instance</div>
<div class="t" style="letter-spacing:0.066px;left:170.500px;top:31.700000000000003px;color:#444">main</div>
<div class="t" style="letter-spacing:-0.114px;left:51.500px;top:100px;font-weight:bold;font-size:8.050px;color:#111">TestCase_IOT_Lost_Instance</div>
<div class="t" style="letter-spacing:-0.114px;left:214px;top:100px;font-weight:bold;font-size:8.050px;color:#111">TestCase_IOT_Lost_Instance</div>
<div class="t" style="letter-spacing:-0.073px;left:76.500px;top:124px;color:#4a4a4a">getVulnerableSource</div>
<div class="t" style="letter-spacing:0.077px;left:238px;top:124px;color:#4a4a4a">writeToUnknownSink</div>
<div class="t" style="letter-spacing:0.009px;left:83.500px;top:144px;color:#444">return value</div>
<div class="t" style="letter-spacing:-0.086px;left:256px;top:144px;color:#444">source</div>
<div class="t" style="left:19.500px;top:191.8px;font-weight:bold;font-size:8.050px;color:#111">java.io.FileInputStream</div>
<div class="t" style="left:132.500px;top:191.8px;font-weight:bold;font-size:8.050px;color:#111">java.lang.String</div>
<div class="t" style="left:214px;top:191.8px;font-weight:bold;font-size:8.050px;color:#111">java.lang.System</div>
<div class="sb" style="left:788px;top:1px;width:12px;height:195px"></div>
<div style="left:788.500px;top:12.5px;width:11px;height:118.500px;background:#cdcdcd"></div>
<svg style="left:790.500px;top:5px" width="7" height="6" viewBox="0 0 7 6"><path d="M.8 4.500l2.700-3 2.700 3" stroke="#444" stroke-width="1.200" fill="none"/></svg>
<svg style="left:790.500px;top:187px" width="7" height="6" viewBox="0 0 7 6"><path d="M.8 1.500l2.700 3 2.700-3" stroke="#444" stroke-width="1.200" fill="none"/></svg>
<div style="left:0;top:195.8px;width:801px;height:4px;background:#fff"></div>
</div>
</div>
<!-- REMEDIATION PANEL -->
<div class="pan" id="pRem" style="left:805px;top:270px;width:395px;height:432px">
<div style="left:0px;top:0;width:395px;height:432px;border:1px solid #b6b6b6;border-radius:3.500px 3.500px 0 0;background:#fbfbfb"></div><div style="left:1px;top:1px;width:393px;height:15.500px;background:#f0f0f0;border-radius:3px 3px 0 0"></div><div class="hl" style="left:124px;top:16.700px;width:270px;background:#b6b6b6"></div>
<div style="left:1px;top:1px;width:124px;height:16.500px;background:#fff;border-right:1px solid #b6b6b6;border-radius:3px 3px 0 0"></div>
<svg style="left:3px;top:3px" width="11" height="11" viewBox="0 0 11 11"><rect x=".5" y=".5" width="9.500" height="9.500" fill="#e8eef6" stroke="#5a5a5a" stroke-width=".9"/><path d="M.5 10.500h10v-9" stroke="#999" stroke-width=".8" fill="none"/><circle cx="5.300" cy="4" r="2.400" fill="#3a8ae0"/><circle cx="5.300" cy="4" r="1" fill="#d8ecff"/><rect x="4.300" y="6.300" width="2" height="2.300" fill="#3a6ab0"/></svg>
<div class="t" style="letter-spacing:-0.078px;left:17px;top:2.300px">Remediation Assistance</div>
<svg style="left:112px;top:4.5px" width="8" height="8" viewBox="0 0 8 8"><path d="M.8 .8h1.600l1.600 2 1.600-2h1.600l-2.400 3.200 2.400 3.200h-1.600l-1.600-2-1.600 2h-1.600l2.400-3.200z" fill="#fff" stroke="#808080" stroke-width=".6"/></svg>
<svg style="left:363px;top:4px" width="26" height="10" viewBox="0 0 26 10"><rect x=".4" y="1.200" width="7.600" height="2.500" rx=".9" fill="#fff" stroke="#808080" stroke-width=".8"/><rect x="17.200" y="1.300" width="7" height="7.200" rx=".5" fill="#fff" stroke="#707070" stroke-width=".85"/><path d="M17.500 2.500h6.400" stroke="#b0b0b0" stroke-width="1.200"/></svg>
<div style="left:2px;top:18px;width:391px;height:29px;background:#f4f4f4;border-left:1px solid #b8b8b8"></div>
<div style="left:8.299999999999955px;top:25px;width:82.500px;height:13px;background:#dce8f5;border:1.300px solid #333"></div>
<div class="t" style="letter-spacing:0.112px;left:11.299999999999955px;top:25.69999999999999px;color:#2a6fb0;font-size:8.600px">Validation.Required</div>
<div class="t lnk" style="letter-spacing:0.328px;left:99.29999999999995px;top:25.69999999999999px;color:#2a7ad8;font-size:8.600px">20 - Input Validation</div>
<div style="left:178.5px;top:43.5px;width:10.500px;height:2px;background:#bcbcbc"></div>
<div style="left:3px;top:47.500px;width:2px;height:382px;background:#f2f3f3"></div><div class="vl" style="left:2.200px;top:46.500px;height:384px;background:#a6a6a6"></div><div style="left:4px;top:46.500px;width:389.500px;height:384px;background:#f2f3f3;border:1px solid #a6a6a6;border-left:none;overflow:hidden" id="brow">
<div class="t" style="letter-spacing:-0.254px;left:4.7000000000000455px;top:4.800000000000011px;font-weight:bold;font-size:10.600px;color:#504a44">Vulnerability Type</div>
<div class="t" style="letter-spacing:0.314px;left:5.5px;top:15.300000000000011px;height:16px;line-height:16px;font-weight:bold;font-size:14.600px;color:#0f5a9c">Validation.Required</div>
<div class="rb" style="letter-spacing:0.174px;left:5px;top:37.47px">Input validation is necessary to ensure the integrity of the dynamic data of</div>
<div class="rb" style="letter-spacing:0.155px;left:5px;top:48.93px">the application. Validation is useful to protect against cross-site scripting,</div>
<div class="rb" style="letter-spacing:0.048px;left:5px;top:60.39px">SQL and command injection, and corrupt application data fields. Even if</div>
<div class="rb" style="letter-spacing:0.081px;left:5px;top:71.85px">there are no directly vulnerable uses of a piece of data inside one</div>
<div class="rb" style="letter-spacing:0.090px;left:5px;top:83.31px">application, data that is being passed to other applications should be</div>
<div class="rb" style="letter-spacing:0.151px;left:5px;top:94.77px">validated to ensure that those applications are not given bad data.</div>
<div class="rb" style="letter-spacing:0.094px;left:5px;top:106.23px">Validation, especially for size and metacharacters that might cause string</div>
<div class="rb" style="letter-spacing:0.023px;left:5px;top:117.69px">expansion, is even more important when dealing with fixed size, overflowable</div>
<div class="rb" style="letter-spacing:0.020px;left:5px;top:129.15px">buffers.</div>
<div class="rb" style="letter-spacing:0.081px;left:5px;top:146.47px">You should validate input from untrusted sources before using it. The</div>
<div class="rb" style="letter-spacing:0.130px;left:5px;top:157.93px">untrusted data sources can be HTTP requests or other network traffic, file</div>
<div class="rb" style="letter-spacing:0.146px;left:5px;top:169.39px">systems, databases, and any external systems that provide data to the</div>
<div class="rb" style="letter-spacing:0.127px;left:5px;top:180.85px">application. In the case of HTTP requests, validate all parts of the request,</div>
<div class="rb" style="letter-spacing:0.023px;left:5px;top:192.31px">including headers, form fields, cookies, and URL components that transfer</div>
<div class="rb" style="letter-spacing:0.090px;left:5px;top:203.77px">information from the browser to the server side application.</div>
<div class="rb" style="letter-spacing:0.137px;left:5px;top:220.97px">Attackers use unvalidated parameters to target the application's security</div>
<div class="rb" style="letter-spacing:0.025px;left:5px;top:232.43px">mechanisms such as authentication and authorization or business logic, and</div>
<div class="rb" style="letter-spacing:0.077px;left:5px;top:243.89px">as the primary vector for exercising many other kinds of error, including</div>
<div class="rb" style="letter-spacing:0.114px;left:5px;top:255.35px">buffer overflows. If the unvalidated parameters are stored in log files, used</div>
<div class="rb" style="letter-spacing:0.006px;left:5px;top:266.81px">in dynamically generated database queries or shell commands, and/or stored</div>
<div class="rb" style="letter-spacing:0.133px;left:5px;top:278.27px">in database tables, attackers may also target the server operating system,</div>
<div class="rb" style="letter-spacing:0.075px;left:5px;top:289.73px">a database, back-end processing systems, or even log viewing tools.</div>
<div class="rb" style="letter-spacing:0.053px;left:5px;top:306.47px">For example, if the application looks up products from the database using an</div>
<div class="rb" style="letter-spacing:0.040px;left:5px;top:317.93px">unvalidated productID from HTTP request. This productID can be</div>
<div class="rb" style="letter-spacing:0.062px;left:5px;top:329.39px">manipulated using readily available tools to submit SQL injection attacks to</div>
<div class="rb" style="letter-spacing:0.052px;left:5px;top:340.85px">the backend database.</div>
<div style="left:4.5px;top:358.20000000000005px;width:380px;height:30px;background:#e3e3e3;border-left:2.500px solid #a8a8a8"></div>
<div class="t" style="left:11px;top:362.200px;font-weight:bold;font-size:9.600px;color:#222">Example</div>
<div class="t" style="left:369px;top:361.5px;font-style:italic;font-size:9px;color:#444">Ja</div>
<div class="t" style="letter-spacing:0.341px;left:170px;top:337.79999999999995px;height:16px;line-height:16px;font-size:13.500px;color:#b9b9b9">Activate Windows</div>
<div class="t" style="letter-spacing:0.515px;left:170px;top:356.5px;font-size:9.500px;color:#c2c2c2">Go to Settings to activate Windows.</div>
<div class="sb" style="left:376.500px;top:0;width:12.500px;height:370.800px"></div>
<div style="left:376.800px;top:24.800px;width:11px;height:86.700px;background:#cdcdcd"></div>
<svg style="left:377.500px;top:11.500px" width="9" height="7" viewBox="0 0 9 7"><path d="M.8 5.500l3.700-4 3.700 4" stroke="#444" stroke-width="1.300" fill="none"/></svg>
<svg style="left:377.500px;top:351px" width="9" height="7" viewBox="0 0 9 7"><path d="M.8 1.500l3.700 4 3.700-4" stroke="#444" stroke-width="1.300" fill="none"/></svg>
<div class="sb" style="left:0;top:370.800px;width:388px;height:12px"></div>
<div style="left:23.300px;top:371.300px;width:237px;height:10.500px;background:#cdcdcd"></div>
<svg style="left:10.5px;top:372.200px" width="7" height="9" viewBox="0 0 7 9"><path d="M5.500 .8l-4 3.700 4 3.700" stroke="#444" stroke-width="1.300" fill="none"/></svg>
<svg style="left:357px;top:372.200px" width="7" height="9" viewBox="0 0 7 9"><path d="M1.500 .8l4 3.700-4 3.700" stroke="#444" stroke-width="1.300" fill="none"/></svg>
</div>
</div>
<!-- EDITOR PANEL -->
<div class="pan" id="pEd" style="left:0;top:488px;width:802px;height:214px">
<div style="left:-1px;top:1px;width:803px;height:213px;border:1px solid #b6b6b6;border-radius:3.500px 3.500px 0 0;background:#fbfbfb"></div><div style="left:0;top:2px;width:801px;height:15.500px;background:#f0f0f0;border-radius:3px 3px 0 0"></div>
<div class="hl" style="left:0;top:17.600px;width:801px;background:#b6b6b6"></div>
<div class="vl" style="left:108.5px;top:1.500px;height:16px"></div>
<div class="vl" style="left:217.0px;top:1.500px;height:16px"></div>
<div class="vl" style="left:325.5px;top:1.500px;height:16px"></div>
<div class="vl" style="left:434.0px;top:1.500px;height:16px"></div>
<div class="vl" style="left:543.0px;top:1.500px;height:16px"></div>
<div class="vl" style="left:651.0px;top:1.500px;height:16px"></div>
<div class="vl" style="left:759.0px;top:1.500px;height:16px"></div>
<div style="left:544.0px;top:1.500px;width:107.0px;height:17px;background:#fff"></div>
<svg style="left:3.5px;top:5px" width="8" height="10" viewBox="0 0 8 10"><rect x=".5" y=".5" width="7" height="9" rx="1" fill="#f4f6ff" stroke="#8a8aa0" stroke-width=".8"/><path d="M5 2.200v4c0 1.300-2 1.400-2.500 .3" stroke="#1a28d0" stroke-width="1.300" fill="none"/><path d="M3.500 2.200h2.300" stroke="#1a28d0" stroke-width="1"/></svg>
<div class="t" style="letter-spacing:-0.130px;left:17px;top:5.00px;font-size:8.050px">TestCase_IOT_Inst...</div>
<svg style="left:112.0px;top:5px" width="8" height="10" viewBox="0 0 8 10"><rect x=".5" y=".5" width="7" height="9" rx="1" fill="#f4f6ff" stroke="#8a8aa0" stroke-width=".8"/><path d="M5 2.200v4c0 1.300-2 1.400-2.500 .3" stroke="#1a28d0" stroke-width="1.300" fill="none"/><path d="M3.500 2.200h2.300" stroke="#1a28d0" stroke-width="1"/></svg>
<div class="t" style="letter-spacing:-0.163px;left:125.5px;top:5.00px;font-size:8.050px">TestCase_IOT_Los...</div>
<svg style="left:221.0px;top:5px" width="8" height="10" viewBox="0 0 8 10"><rect x=".5" y=".5" width="7" height="9" rx="1" fill="#f4f6ff" stroke="#8a8aa0" stroke-width=".8"/><path d="M5 2.200v4c0 1.300-2 1.400-2.500 .3" stroke="#1a28d0" stroke-width="1.300" fill="none"/><path d="M3.500 2.200h2.300" stroke="#1a28d0" stroke-width="1"/></svg>
<div class="t" style="letter-spacing:-0.233px;left:234.5px;top:5.00px;font-size:8.050px">TestCase_IOT_Use...</div>
<svg style="left:329.5px;top:5px" width="8" height="10" viewBox="0 0 8 10"><rect x=".5" y=".5" width="7" height="9" rx="1" fill="#f4f6ff" stroke="#8a8aa0" stroke-width=".8"/><path d="M5 2.200v4c0 1.300-2 1.400-2.500 .3" stroke="#1a28d0" stroke-width="1.300" fill="none"/><path d="M3.500 2.200h2.300" stroke="#1a28d0" stroke-width="1"/></svg>
<div class="t" style="letter-spacing:-0.239px;left:343px;top:5.00px;font-size:8.050px">TestCase_IOT_Ov...</div>
<svg style="left:438.0px;top:5px" width="8" height="10" viewBox="0 0 8 10"><rect x=".5" y=".5" width="7" height="9" rx="1" fill="#f4f6ff" stroke="#8a8aa0" stroke-width=".8"/><path d="M5 2.200v4c0 1.300-2 1.400-2.500 .3" stroke="#1a28d0" stroke-width="1.300" fill="none"/><path d="M3.500 2.200h2.300" stroke="#1a28d0" stroke-width="1"/></svg>
<div class="t" style="letter-spacing:-0.293px;left:451.5px;top:5.00px;font-size:8.050px">TestCase_IOT_Si...</div>
<svg style="left:546.5px;top:5px" width="8" height="10" viewBox="0 0 8 10"><rect x=".5" y=".5" width="7" height="9" rx="1" fill="#f4f6ff" stroke="#8a8aa0" stroke-width=".8"/><path d="M5 2.200v4c0 1.300-2 1.400-2.500 .3" stroke="#1a28d0" stroke-width="1.300" fill="none"/><path d="M3.500 2.200h2.300" stroke="#1a28d0" stroke-width="1"/></svg>
<div class="t" style="letter-spacing:-0.189px;left:560px;top:5.00px;font-size:8.050px">TestCase_IOT_Los...</div>
<svg style="left:655.0px;top:5px" width="8" height="10" viewBox="0 0 8 10"><rect x=".5" y=".5" width="7" height="9" rx="1" fill="#f4f6ff" stroke="#8a8aa0" stroke-width=".8"/><path d="M5 2.200v4c0 1.300-2 1.400-2.500 .3" stroke="#1a28d0" stroke-width="1.300" fill="none"/><path d="M3.500 2.200h2.300" stroke="#1a28d0" stroke-width="1"/></svg>
<div class="t" style="letter-spacing:-0.189px;left:668.5px;top:5.00px;font-size:8.050px">TestCase_IOT_Los...</div>
<svg style="left:637.5px;top:6px" width="8" height="8" viewBox="0 0 8 8"><path d="M.8 .8h1.600l1.600 2 1.600-2h1.600l-2.400 3.200 2.400 3.200h-1.600l-1.600-2-1.600 2h-1.600l2.400-3.200z" fill="#fff" stroke="#808080" stroke-width=".6"/></svg>
<svg style="left:770px;top:5.300px" width="26" height="10" viewBox="0 0 26 10"><rect x=".4" y="1.200" width="7.600" height="2.500" rx=".9" fill="#fff" stroke="#808080" stroke-width=".8"/><rect x="17.200" y="1.300" width="7" height="7.200" rx=".5" fill="#fff" stroke="#707070" stroke-width=".85"/><path d="M17.500 2.500h6.400" stroke="#b0b0b0" stroke-width="1.200"/></svg>
<div style="left:2px;top:18px;width:799px;height:195.500px;background:#fff;overflow:hidden" id="edC">
<div style="left:1px;top:0;width:7.500px;height:184px;background:#ececec"></div>
<div style="left:22.5px;top:123.29999999999995px;width:753.8px;height:11.500px;background:#e8f2fe"></div>
<div class="ln" style="left:0px;top:3.39px">45</div>
<div class="code" style="left:22.8px;top:3.39px">    <span class="kw">public</span> String getVulnerableSource(String file) <span class="kw">throws</span> Exception {</div>
<div class="ln" style="left:0px;top:15.48px">46</div>
<div class="code" style="left:22.8px;top:15.48px">        FileInputStream fis = <span class="kw">new</span> FileInputStream(file);</div>
<div class="ln" style="left:0px;top:27.57px">47</div>
<div class="code" style="left:22.8px;top:27.57px">        <span class="kw">byte</span>[] buf = <span class="kw">new</span> <span class="kw">byte</span>[100];</div>
<div class="ln" style="left:0px;top:39.66px">48</div>
<div class="code" style="left:22.8px;top:39.66px">        fis.read(buf);</div>
<div class="ln" style="left:0px;top:51.75px">49</div>
<div class="code" style="left:22.8px;top:51.75px">        String ret = <span class="kw">new</span> String(buf);</div>
<div class="ln" style="left:0px;top:63.84px">50</div>
<div class="code" style="left:22.8px;top:63.84px">        fis.close();</div>
<div class="ln" style="left:0px;top:75.93px">51</div>
<div class="code" style="left:22.8px;top:75.93px">        <span class="kw">return</span> ret;</div>
<div class="ln" style="left:0px;top:88.02px">52</div>
<div class="code" style="left:22.8px;top:88.02px">    }</div>
<div class="ln" style="left:0px;top:100.11px">53</div>
<div class="ln" style="left:0px;top:112.20px">54</div>
<div class="code" style="left:22.8px;top:112.20px">    <span class="kw">public</span> <span class="kw">void</span> writeToUnknownSink(String key, String str) {</div>
<div class="ln" style="left:0px;top:124.29px">55</div>
<div class="code" style="left:22.8px;top:124.29px">        System.setProperty(key, str);</div>
<div class="ln" style="left:0px;top:136.38px">56</div>
<div class="code" style="left:22.8px;top:136.38px">    }</div>
<div class="ln" style="left:0px;top:148.47px">57</div>
<div class="code" style="left:22.8px;top:148.47px">}</div>
<div class="ln" style="left:0px;top:160.56px">58</div>
<svg style="left:0.7999999999999998px;top:125px" width="8" height="8" viewBox="0 0 8 8"><path d="M4 .5l3.600 7h-7.200z" fill="#f4c430" stroke="#b88a10" stroke-width=".6"/><path d="M4 3v2.300M4 6v.8" stroke="#333" stroke-width=".9"/></svg>
<div class="sb" style="left:777.200px;top:0;width:22px;height:195.500px"></div>
<div style="left:778px;top:130px;width:10px;height:39.500px;background:#cdcdcd"></div>
<svg style="left:779.5px;top:5.5px" width="7" height="6" viewBox="0 0 7 6"><path d="M.8 4.500l2.700-3 2.700 3" stroke="#444" stroke-width="1.200" fill="none"/></svg>
<svg style="left:779.5px;top:173.5px" width="7" height="6" viewBox="0 0 7 6"><path d="M.8 1.500l2.700 3 2.700-3" stroke="#444" stroke-width="1.200" fill="none"/></svg>
<div style="left:790.5px;top:159.5px;width:5px;height:3px;border:1px solid #e8c040;background:#fdf6d8"></div>
<div style="left:1px;top:182.5px;width:787px;height:12px;background:#f0f0f0"></div>
<svg style="left:24.5px;top:184.5px" width="6" height="7" viewBox="0 0 6 7"><path d="M4.500 .8l-3 2.700 3 2.700" stroke="#b4b4b4" stroke-width="1.200" fill="none"/></svg>
<svg style="left:768px;top:184.5px" width="6" height="7" viewBox="0 0 6 7"><path d="M1.500 .8l3 2.700-3 2.700" stroke="#b4b4b4" stroke-width="1.200" fill="none"/></svg>
</div>
</div>

<!-- STATUS -->
<div id="status" style="top:701px;height:20px;background:#f0f0f0">
<div style="left:0;top:0;width:1200px;height:1px;background:#fbfbfb"></div>
<div style="left:0;top:1px;width:1200px;height:1px;background:#b9b9b9"></div>
<div style="left:0;top:19px;width:1200px;height:1px;background:#fbfbfb"></div>
<div style="left:0;top:11.300px;width:400px;height:1.900px;overflow:hidden"><div class="t" style="letter-spacing:-0.300px;left:3px;top:-2.700px;color:#111">Simple_IOT - 1/24/21 11:53PM</div><div class="t" style="letter-spacing:-0.111px;left:152px;top:-2.700px;color:#2050d0">Findings    filtered: 0</div></div>
<svg style="left:262px;top:4.5px" width="11" height="11" viewBox="0 0 11 11"><g stroke="#1a4fa8" stroke-width="1.700"><path d="M5.500 .2v10.600M.2 5.500h10.600M1.750 1.750l7.500 7.500M9.250 1.750l-7.500 7.500"/></g><circle cx="5.500" cy="5.500" r="3.500" fill="#1f5fb8"/><circle cx="5.500" cy="5.500" r="2.300" fill="#fff"/></svg>
<div class="t" style="letter-spacing:-0.075px;left:277px;top:4.500px">1 findings selected</div>
<div style="left:750.5px;top:3px;width:1px;height:15px;background:#b0b0b0"></div>
<div style="left:825.0px;top:3px;width:1px;height:15px;background:#b0b0b0"></div>
<div style="left:895.0px;top:3px;width:1px;height:15px;background:#b0b0b0"></div>
<svg style="left:967px;top:4.500px" width="12" height="12" viewBox="0 0 12 12"><circle cx="6" cy="3.200" r="2.600" fill="#2f7fd0"/><path d="M.8 11.500c0-4 2.200-5.300 5.200-5.300s5.200 1.300 5.200 5.300z" fill="#2f7fd0"/><path d="M6 6.500l-1.300 4h2.600z" fill="#d8ecff"/></svg>
<svg style="left:986px;top:4.500px" width="9" height="12" viewBox="0 0 9 12"><rect x="1" y=".5" width="6.500" height="11" rx="1" fill="#f0e8e0" stroke="#8a6a4a" stroke-width=".8"/><rect x="2.300" y="2" width="4" height="6.500" fill="#e8a070"/></svg>
<svg style="left:1182px;top:6px" width="12" height="9.500" viewBox="0 0 13 11"><rect x=".5" y=".5" width="8" height="6" rx="1" fill="#dfe6df" stroke="#8a9a8a" stroke-width=".8"/><rect x="3.500" y="3.500" width="8.500" height="6.500" rx="1" fill="#e8f0e8" stroke="#8aa08a" stroke-width=".8"/><rect x="5" y="5.500" width="4" height="3" fill="#38a848"/><rect x="9" y="5.500" width="2" height="3" fill="#fff"/></svg>
</div>
<!-- TASKBAR -->
<div id="taskbar" style="top:721px;height:29px;background:#020307">
<div style="left:175px;top:0;width:34px;height:29px;background:#343434"></div>
<div style="left:108px;top:27.299999999999955px;width:28px;height:2px;background:#76b9ed"></div>
<div style="left:175px;top:27.299999999999955px;width:34px;height:2px;background:#76b9ed"></div>
<svg style="left:10.200px;top:8.5px" width="12" height="12" viewBox="0 0 12 12"><path d="M0 1.700l5-.7v4.700h-5zM5.800 .9l6.200-.9v5.700h-6.200zM0 6.500h5v4.700l-5-.7zM5.800 6.500h6.200v5.500l-6.200-.9z" fill="#fff"/></svg>
<svg style="left:45px;top:8px" width="14" height="14" viewBox="0 0 14 14"><circle cx="8.500" cy="5.200" r="3.800" fill="none" stroke="#fff" stroke-width="1.200"/><path d="M5.800 8l-4.600 4.800" stroke="#fff" stroke-width="1.300"/></svg>
<svg style="left:78px;top:9px" width="16" height="12" viewBox="0 0 16 12"><rect x="3.500" y=".8" width="9" height="10" rx="1" fill="none" stroke="#fff" stroke-width="1.100"/><path d="M1.800 2.500h-1.200v6.500h1.200M14.200 2.500h1.200v6.500h-1.200" stroke="#fff" stroke-width="1" fill="none"/></svg>
<svg style="left:112px;top:5px" width="20" height="18" viewBox="0 0 20 18"><path d="M3.300 10.800h11.900c.3-4.300-2.300-6.800-5.700-6.800-3.700 0-6.300 2.700-6.300 6.300 0 3.800 2.800 6.200 6.400 6.200 2.500 0 4.300-1.200 5.300-3.300h-3.200c-.5.600-1.200.9-2.100.9-1.700 0-2.900-1.200-3-3.300zM6.600 8.700c.2-1.600 1.300-2.500 2.800-2.500 1.500 0 2.500.900 2.700 2.500z" fill="#35a8e8"/><path d="M17.500 5c1.300-2.600.2-4-2.700-3-3.300 1.200-8.500 5.500-11.300 10.300-1.800 3.300-.6 4.700 2.300 3.300" stroke="#f4bc28" stroke-width="1.600" fill="none"/></svg>
<svg style="left:149.800px;top:7.500px" width="15.500" height="14" viewBox="0 0 17 14" preserveAspectRatio="none"><path d="M.5 1h5.500l1.200 1.600h9.300v11h-16z" fill="#f6d878"/><rect x=".5" y="3.800" width="16" height="9.800" fill="#fde594"/><rect x="4" y="7.500" width="9" height="6.100" fill="#3a9ae0"/><rect x="6.500" y="10" width="4" height="3.600" fill="#fbe08a"/></svg>
<svg style="left:183.500px;top:6.5px" width="17" height="17" viewBox="0 0 17 17"><defs><radialGradient id="asg" cx=".4" cy=".35" r=".7"><stop offset="0" stop-color="#9cc8f0"/><stop offset="1" stop-color="#2a68b8"/></radialGradient></defs><circle cx="8.500" cy="8.500" r="8.200" fill="url(#asg)"/><path d="M8.800 1.800c2.700 2.300 3 5.300 1.400 7.700-.9 1.400-2.400 2.700-1.900 5.200-2.900-1.700-3.500-4.500-2-6.800 1-1.500 2.700-3 2.500-6.100z" fill="#fff"/><path d="M11.800 7c1.300 2 .8 4.500-1.500 6.500.2-2 1.300-3.500 1.500-6.500z" fill="#e4f0fb"/></svg>
<svg style="left:1050px;top:9px" width="68" height="14" viewBox="0 0 68 14"><path d="M2 8l4-4 4 4" stroke="#fff" stroke-width="1.100" fill="none"/><g stroke="#fff" stroke-width=".9" fill="none"><path d="M21 3v7.500h4.500v-7.500M21.800 3v-1.800h3v1.800M23 10.500v1.500h3.500"/><rect x="36" y="2.500" width="8.500" height="6" /><path d="M38 11h4.500M40.200 8.500v2.500M34.500 5v6h2"/><path d="M53.500 5.300h1.800l2.400-2.300v8l-2.400-2.300h-1.800z"/></g><circle cx="60.200" cy="9.700" r="3" fill="#e8202c"/><path d="M58.900 8.400l2.600 2.600M61.500 8.400l-2.600 2.600" stroke="#fff" stroke-width=".9"/></svg>
<div class="t" style="letter-spacing:0.078px;left:1124px;top:2px;color:#fff;font-size:8.300px">5:27 AM</div>
<div class="t" style="letter-spacing:-0.102px;left:1121px;top:14.5px;color:#fff;font-size:8.300px">1/27/2021</div>
<svg style="left:1170px;top:8.800px" width="13" height="13" viewBox="0 0 13 13"><path d="M.8 .8h11.400v8.400h-4.400l-2.600 2.800v-2.800h-4.400z" fill="none" stroke="#fff" stroke-width="1"/></svg>
<div style="left:1196px;top:0;width:1px;height:29px;background:#4a4c52"></div>
</div>

</div>
</body></html>
